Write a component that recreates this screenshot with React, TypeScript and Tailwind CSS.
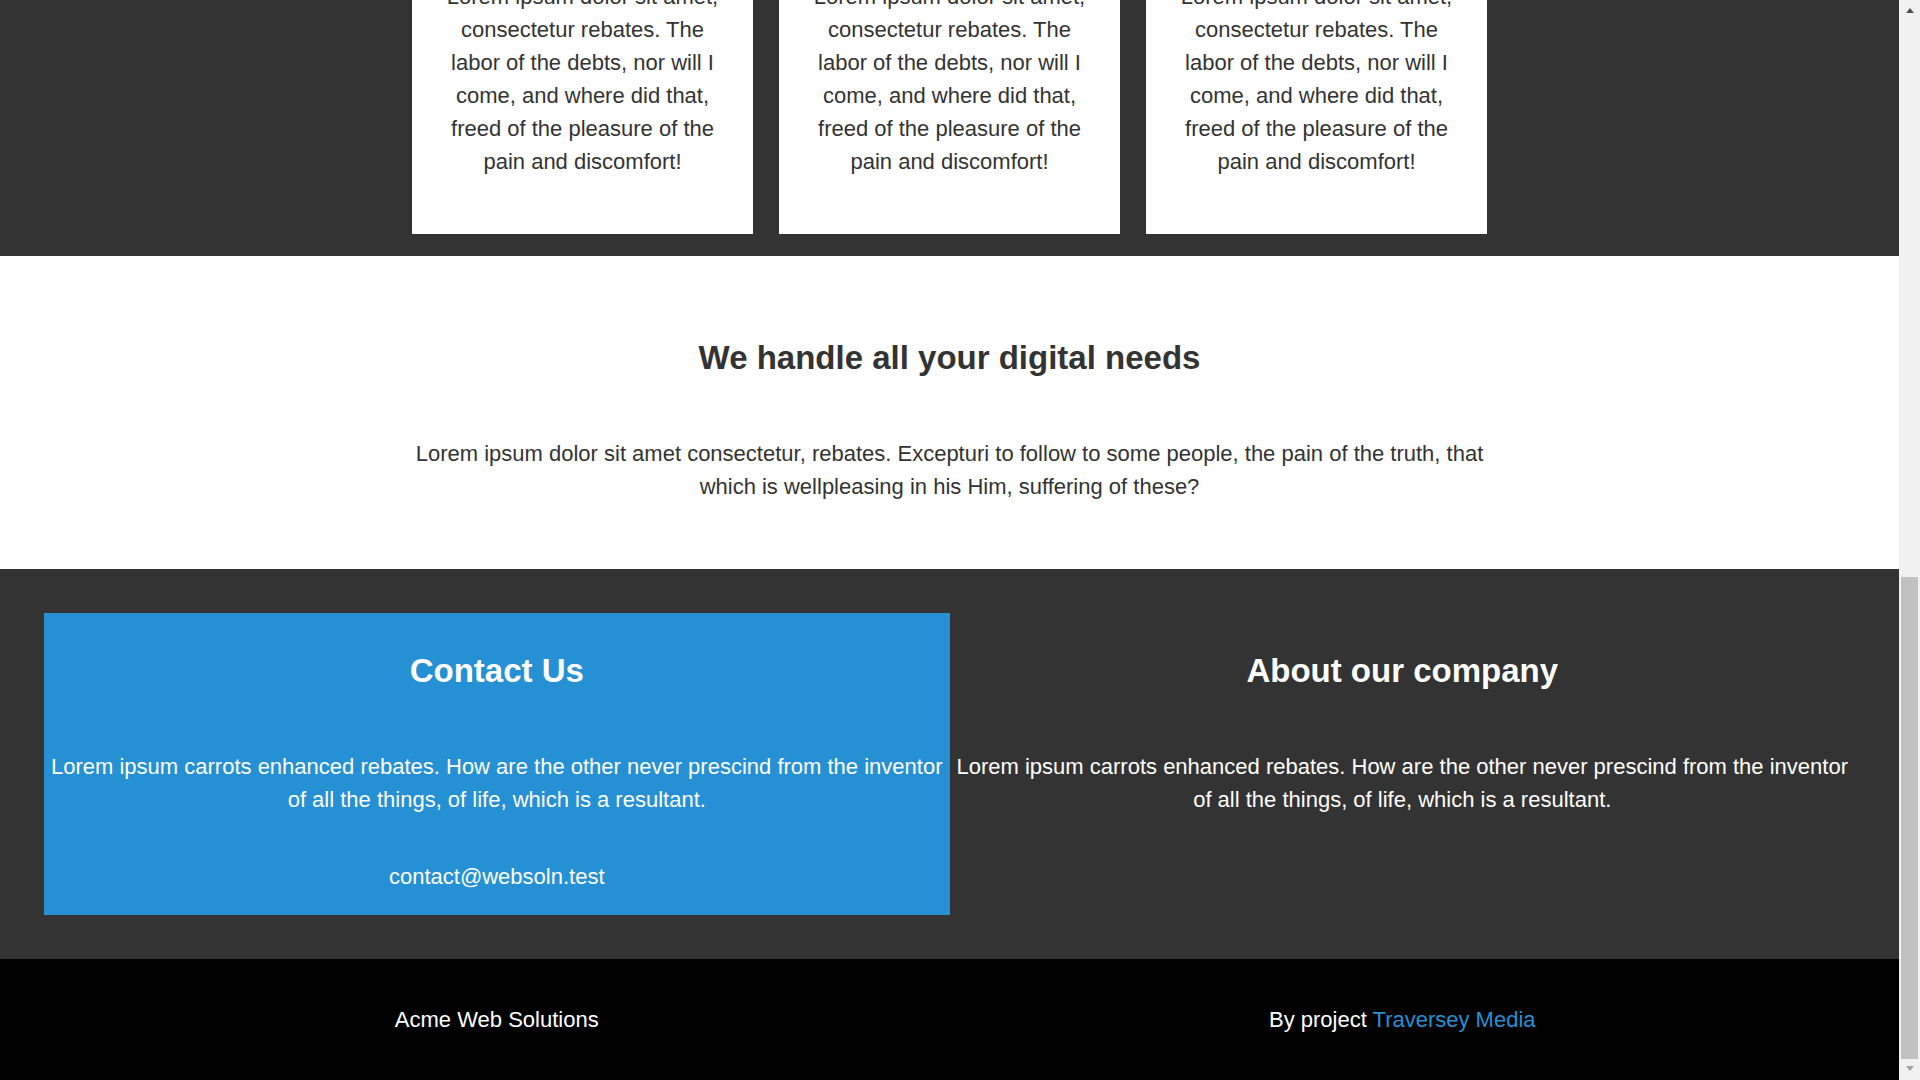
const cardText =
  'Lorem ipsum dolor sit amet, consectetur rebates. The labor of the debts, nor will I come, and where did that, freed of the pleasure of the pain and discomfort!'

const infoText =
  'Lorem ipsum carrots enhanced rebates. How are the other never prescind from the inventor of all the things, of life, which is a resultant.'

function Scrollbar() {
  return (
    <div className="flex w-[21px] shrink-0 flex-col items-center bg-[#f1f1f1]">
      <div className="mt-[8px] h-0 w-0 border-x-[4px] border-b-[5px] border-x-transparent border-b-[#505050]" />
      <div className="mt-[564px] h-[482px] w-[17px] bg-[#c1c1c1]" />
      <div className="mt-[7px] h-0 w-0 border-x-[4px] border-t-[5px] border-x-transparent border-t-[#a3a3a3]" />
    </div>
  )
}

export default function App() {
  return (
    <div className="flex h-[1080px] w-full overflow-hidden font-['Liberation_Sans',Arial,sans-serif] text-[22px] leading-[33px] text-[#333]">
      <div className="flex min-w-0 flex-1 flex-col">
        {/* boxes, scrolled past their top */}
        <section className="flex h-[256px] shrink-0 justify-center overflow-hidden bg-[#333]">
          <div className="-mt-[42px] flex items-start gap-[26px]">
            {[0, 1, 2].map((i) => (
              <div key={i} className="w-[341px] bg-white px-[30px] pb-[56px] pt-[22px] text-center">
                <p>{cardText}</p>
              </div>
            ))}
          </div>
        </section>

        {/* info */}
        <section className="flex h-[313px] shrink-0 flex-col items-center bg-white pt-[82px] text-center">
          <h2 className="text-[33px] font-bold leading-[40px]">We handle all your digital needs</h2>
          <p className="mt-[59px] max-w-[1100px]">
            Lorem ipsum dolor sit amet consectetur, rebates. Excepturi to follow to some people, the pain of the truth,
            that which is wellpleasing in his Him, suffering of these?
          </p>
        </section>

        {/* contact / about */}
        <section className="grid h-[390px] shrink-0 grid-cols-2 bg-[#333] p-[44px] text-center text-white">
          <div className="bg-[#2690d4] px-1 pb-[22px] pt-[38px]">
            <h2 className="text-[33px] font-bold leading-[40px]">Contact Us</h2>
            <p className="mt-[59px]">{infoText}</p>
            <p className="mt-[44px]">contact@websoln.test</p>
          </div>
          <div className="px-1 pb-[22px] pt-[38px]">
            <h2 className="text-[33px] font-bold leading-[40px]">About our company</h2>
            <p className="mt-[59px]">{infoText}</p>
          </div>
        </section>

        <footer className="grid h-[121px] shrink-0 grid-cols-2 items-center bg-black px-[44px] text-center text-white">
          <p>Acme Web Solutions</p>
          <p>
            By project <a className="text-[#2690d4]">Traversey Media</a>
          </p>
        </footer>
      </div>
      <Scrollbar />
    </div>
  )
}
